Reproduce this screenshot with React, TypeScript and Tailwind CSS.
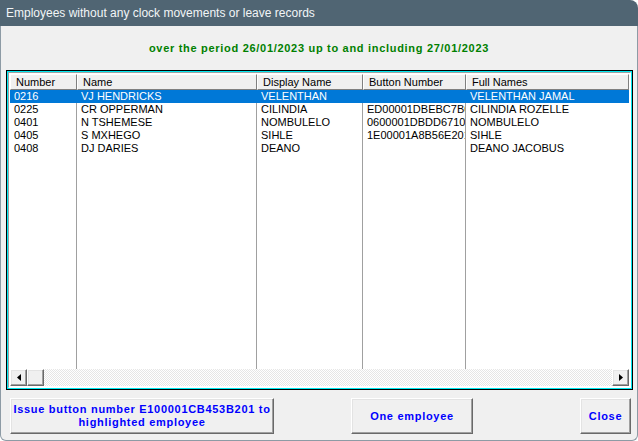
import React from 'react';

type Employee = {
  number: string;
  name: string;
  display: string;
  button: string;
  full: string;
};

const EMPLOYEES: Employee[] = [
  { number: '0216', name: 'VJ HENDRICKS', display: 'VELENTHAN', button: '', full: 'VELENTHAN JAMAL' },
  { number: '0225', name: 'CR OPPERMAN', display: 'CILINDIA', button: 'ED00001DBEBC7B01', full: 'CILINDIA ROZELLE' },
  { number: '0401', name: 'N TSHEMESE', display: 'NOMBULELO', button: '0600001DBDD67101', full: 'NOMBULELO' },
  { number: '0405', name: 'S MXHEGO', display: 'SIHLE', button: '1E00001A8B56E201', full: 'SIHLE' },
  { number: '0408', name: 'DJ DARIES', display: 'DEANO', button: '', full: 'DEANO JACOBUS' },
];

const COLUMNS = [
  { title: 'Number', width: 'w-[67px]' },
  { title: 'Name', width: 'w-[180px]' },
  { title: 'Display Name', width: 'w-[106px]' },
  { title: 'Button Number', width: 'w-[103px]' },
  { title: 'Full Names', width: 'flex-1' },
];

const btn3d =
  'bg-[#f0f0f0] border border-t-white border-l-white border-r-[#696969] border-b-[#696969] shadow-[inset_-1px_-1px_0_#a0a0a0,inset_1px_1px_0_#e3e3e3]';

const ArrowButton = ({ dir }: { dir: 'left' | 'right' }) => (
  <div className={`w-[17px] h-[17px] flex items-center justify-center ${btn3d}`}>
    <svg width="4" height="7" viewBox="0 0 4 7">
      {dir === 'left' ? <polygon points="4,0 4,7 0,3.5" fill="#000" /> : <polygon points="0,0 0,7 4,3.5" fill="#000" />}
    </svg>
  </div>
);

const EmployeeList = () => {
  const cells = (e: Employee) => [e.number, e.name, e.display, e.button, e.full];
  return (
    <div className="ml-[6px] w-[627px] h-[320px] border border-black">
      <div className="h-full border border-[#00e8f0]">
        <div className="h-full border border-t-[#a0a0a0] border-l-[#a0a0a0] border-r-white border-b-white bg-white p-px flex flex-col">
          {/* column headers */}
          <div className="flex h-[16px] shrink-0">
            {COLUMNS.map((c) => (
              <div
                key={c.title}
                className={`${c.width} bg-[#f0f0f0] border border-t-white border-l-white border-r-[#808080] border-b-[#808080] pl-[5px] leading-[14px] whitespace-nowrap overflow-hidden`}
              >
                {c.title}
              </div>
            ))}
          </div>

          {EMPLOYEES.map((e, i) => {
            const selected = i === 0;
            return (
              <div key={e.number} className={`flex h-[13px] shrink-0 ${selected ? 'bg-[#0078d7] text-white' : 'text-black'}`}>
                {cells(e).map((v, j) => (
                  <div
                    key={j}
                    className={`${COLUMNS[j].width} pl-[4px] leading-[13px] whitespace-nowrap overflow-hidden ${
                      j < 4 ? (selected ? 'border-r border-[#0078d7]' : 'border-r border-[#a0a0a0]') : ''
                    }`}
                  >
                    {v}
                  </div>
                ))}
              </div>
            );
          })}

          {/* empty space below the rows keeps the column lines */}
          <div className="flex flex-1">
            {COLUMNS.map((c, j) => (
              <div key={c.title} className={`${c.width} ${j < 4 ? 'border-r border-[#a0a0a0]' : ''}`} />
            ))}
          </div>

          {/* horizontal scrollbar */}
          <div className="flex h-[17px] shrink-0">
            <ArrowButton dir="left" />
            <div className={`w-[17px] h-[17px] ${btn3d}`} />
            <div className="flex-1 bg-[repeating-conic-gradient(#e6e6e6_0%_25%,#ffffff_0%_50%)] bg-[length:2px_2px]" />
            <ArrowButton dir="right" />
          </div>
        </div>
      </div>
    </div>
  );
};

export default function App() {
  return (
    <div
      className="w-[638px] h-[441px] bg-white flex flex-col text-[11px]"
      style={{ fontFamily: '"Liberation Sans", Arial, sans-serif' }}
    >
      <div className="h-[26px] shrink-0 bg-[#506573] rounded-tr-[8px] flex items-center pl-[6px] text-[12px] text-[#f2f5f7]">
        Employees without any clock movements or leave records
      </div>

      <div className="flex-1 flex flex-col bg-[#f0f0f0] border-l border-r border-b border-[#8d9ba5] rounded-b-[6px]">
        <div className="h-[44px] shrink-0 pt-[16px] text-center leading-[13px] font-bold tracking-[0.7px] text-[#008000]">
          over the period 26/01/2023 up to and including 27/01/2023
        </div>

        <div className="-ml-px">
          <EmployeeList />
        </div>

        <div className="flex mt-[8px] pl-[9px] font-bold tracking-[0.7px] text-[#0000ff] leading-[13px]">
          <button className={`w-[264px] h-[36px] ${btn3d}`}>
            Issue button number E100001CB453B201 to
            <br />
            highlighted employee
          </button>
          <button className={`ml-[77px] w-[122px] h-[36px] ${btn3d}`}>One employee</button>
          <button className={`ml-[107px] w-[51px] h-[36px] ${btn3d}`}>Close</button>
        </div>
      </div>
    </div>
  );
}
